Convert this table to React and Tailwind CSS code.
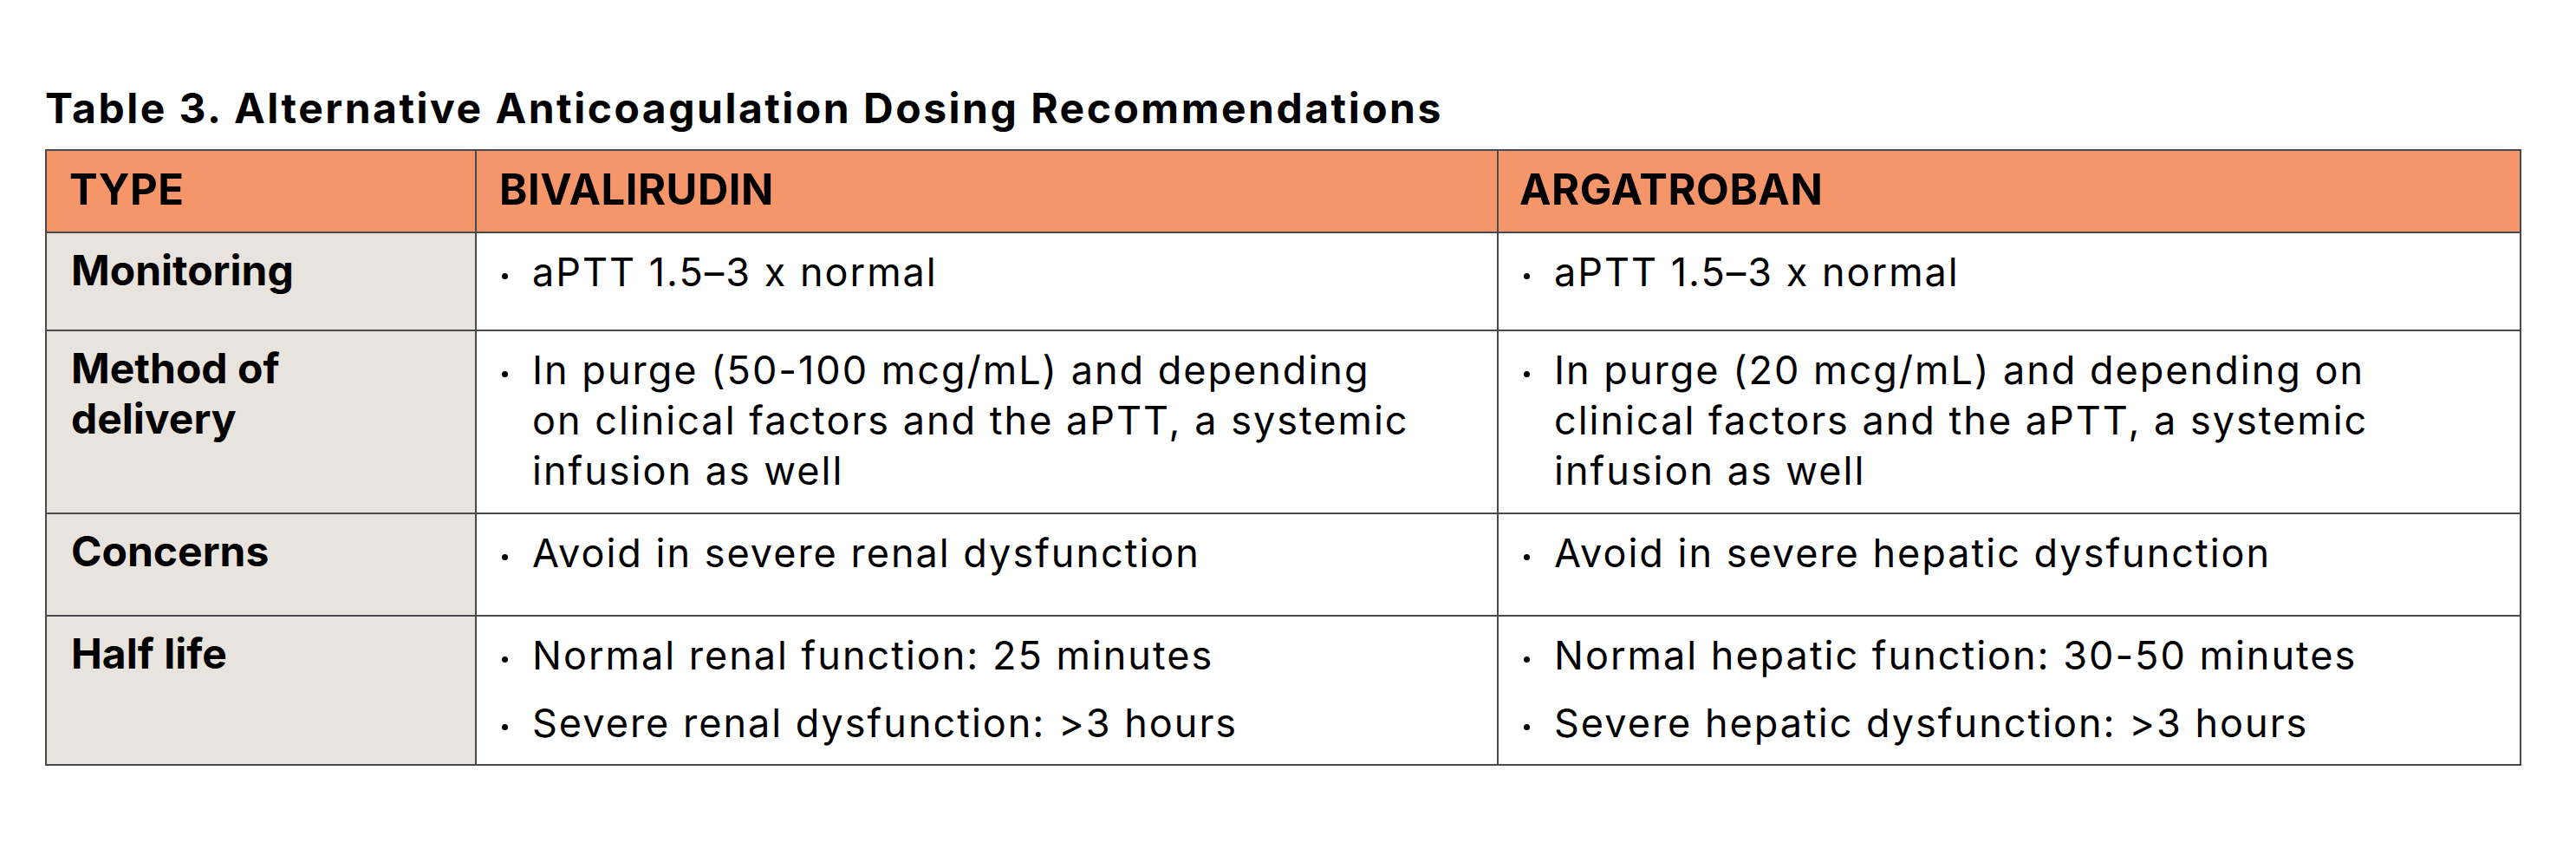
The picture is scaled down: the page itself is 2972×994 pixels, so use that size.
import React from 'react'

const TITLE = 'Table 3. Alternative Anticoagulation Dosing Recommendations'

const rows = [
  {
    label: ['Monitoring'],
    h: 'h-[113px]',
    bival: [['aPTT 1.5–3 x normal']],
    arga: [['aPTT 1.5–3 x normal']],
  },
  {
    label: ['Method of', 'delivery'],
    h: 'h-[211px]',
    bival: [['In purge (50-100 mcg/mL) and depending', 'on clinical factors and the aPTT, a systemic', 'infusion as well']],
    arga: [['In purge (20 mcg/mL) and depending on', 'clinical factors and the aPTT, a systemic', 'infusion as well']],
  },
  {
    label: ['Concerns'],
    h: 'h-[118px]',
    bival: [['Avoid in severe renal dysfunction']],
    arga: [['Avoid in severe hepatic dysfunction']],
  },
  {
    label: ['Half life'],
    h: 'h-[172px]',
    bival: [['Normal renal function: 25 minutes'], ['Severe renal dysfunction: >3 hours']],
    arga: [['Normal hepatic function: 30-50 minutes'], ['Severe hepatic dysfunction: >3 hours']],
  },
]

function Bullets({ items }) {
  return (
    <div className="flex flex-col gap-[20px]">
      {items.map((lines, i) => (
        <div key={i} className="flex">
          <div className="w-[64px] h-[58px] flex items-center justify-center shrink-0">
            <span className="block w-[7px] h-[7px] rounded-full bg-black mt-[8px]" />
          </div>
          <div>
            {lines.map((l, j) => (
              <div key={j}>{l}</div>
            ))}
          </div>
        </div>
      ))}
    </div>
  )
}

export default function App() {
  return (
    <div className="w-[2972px] h-[994px] bg-white text-black font-['Inter',sans-serif] pl-[52px] pt-[96px]">
      <h1 className="text-[48px] leading-[58px] font-bold tracking-[2.5px] mb-[18px]">{TITLE}</h1>

      <div className="grid grid-cols-[496px_1179px_1180px] w-[2857px] border-l-2 border-t-2 border-[#4a4a4a] text-[45px] leading-[58px] tracking-[2px]">
        {/* header */}
        <div className="h-[95px] bg-[#f5956a] border-r-2 border-b-2 border-[#4a4a4a] flex items-center pl-[26px] pb-[4px] font-bold text-[49px] tracking-[0.5px]">TYPE</div>
        <div className="h-[95px] bg-[#f5956a] border-r-2 border-b-2 border-[#4a4a4a] flex items-center pl-[26px] pb-[4px] font-bold text-[49px] tracking-[0.5px]">BIVALIRUDIN</div>
        <div className="h-[95px] bg-[#f5956a] border-r-2 border-b-2 border-[#4a4a4a] flex items-center pl-[24px] pb-[4px] font-bold text-[49px] tracking-[0.5px]">ARGATROBAN</div>

        {rows.map((r) => (
          <React.Fragment key={r.label[0]}>
            <div className={`${r.h} bg-[#e8e4dd] border-r-2 border-b-2 border-[#4a4a4a] pl-[28px] pt-[14px] font-bold text-[48px] tracking-normal`}>
              {r.label.map((l) => (
                <div key={l}>{l}</div>
              ))}
            </div>
            <div className={`${r.h} bg-white border-r-2 border-b-2 border-[#4a4a4a] pt-[16px]`}>
              <Bullets items={r.bival} />
            </div>
            <div className={`${r.h} bg-white border-r-2 border-b-2 border-[#4a4a4a] pt-[16px]`}>
              <Bullets items={r.arga} />
            </div>
          </React.Fragment>
        ))}
      </div>
    </div>
  )
}
